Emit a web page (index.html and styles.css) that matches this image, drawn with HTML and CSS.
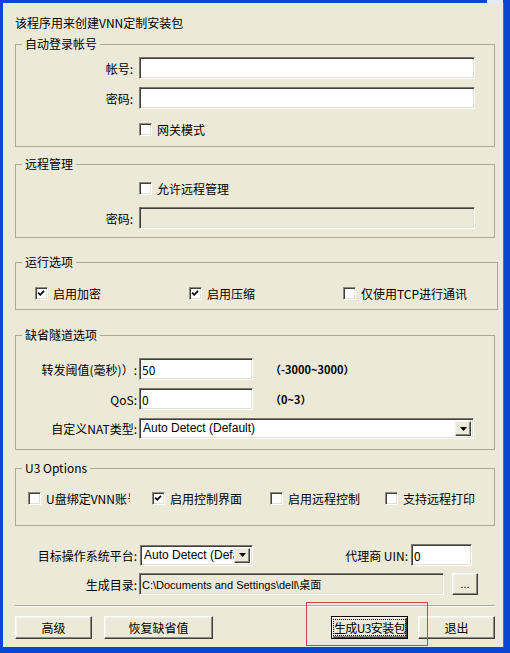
FILE: index.html
```html
<!DOCTYPE html>
<html lang="zh-CN">
<head>
    <meta charset="UTF-8">
    <meta name="viewport" content="width=device-width, initial-scale=1.0">
    <title>VNN U3 安装包</title>
    <link rel="stylesheet" href="styles.css">
</head>
<body>
    <div class="titlebar"><span class="close-edge"></span></div>
    <div class="dialog">
        <p class="intro">该程序用来创建VNN定制安装包</p>

        <!-- 自动登录 -->
        <fieldset class="group login">
            <legend>自动登录帐号</legend>
            <div class="field-row">
                <span class="label">帐号:</span>
                <input class="textbox wide" type="text" value="">
            </div>
            <div class="field-row">
                <span class="label">密码:</span>
                <input class="textbox wide" type="password" value="">
            </div>
            <div class="field-row check-row">
                <span class="label"></span>
                <label class="check"><span class="box"></span>网关模式</label>
            </div>
        </fieldset>

        <!-- 远程管理 -->
        <fieldset class="group remote">
            <legend>远程管理</legend>
            <div class="field-row">
                <span class="label"></span>
                <label class="check"><span class="box"></span>允许远程管理</label>
            </div>
            <div class="field-row">
                <span class="label">密码:</span>
                <input class="textbox wide disabled" type="password" value="" disabled>
            </div>
        </fieldset>

        <!-- 运行选项 -->
        <fieldset class="group run">
            <legend>运行选项</legend>
            <div class="options three">
                <label class="check"><span class="box checked"><svg viewBox="0 0 13 13"><polyline points="2.5,5.5 5,8 9.5,3.5"/></svg></span>启用加密</label>
                <label class="check"><span class="box checked"><svg viewBox="0 0 13 13"><polyline points="2.5,5.5 5,8 9.5,3.5"/></svg></span>启用压缩</label>
                <label class="check"><span class="box"></span>仅使用TCP进行通讯</label>
            </div>
        </fieldset>

        <!-- 缺省隧道选项 -->
        <fieldset class="group tunnel">
            <legend>缺省隧道选项</legend>
            <div class="field-row">
                <span class="label">转发阈值(毫秒)）:</span>
                <input class="textbox short" type="text" value="50">
                <span class="hint">（-3000~3000）</span>
            </div>
            <div class="field-row">
                <span class="label">QoS:</span>
                <input class="textbox short" type="text" value="0">
                <span class="hint">（0~3）</span>
            </div>
            <div class="field-row combo-row">
                <span class="label">自定义NAT类型:</span>
                <div class="combo nat">
                    <span class="combo-text">Auto Detect (Default)</span>
                    <span class="drop"><svg viewBox="0 0 7 4"><polygon points="0,0 7,0 3.5,4"/></svg></span>
                </div>
            </div>
        </fieldset>

        <!-- U3 -->
        <fieldset class="group u3">
            <legend>U3 Options</legend>
            <div class="options four">
                <label class="check"><span class="box"></span><span class="clip">U盘绑定VNN账号</span></label>
                <label class="check"><span class="box checked"><svg viewBox="0 0 13 13"><polyline points="2.5,5.5 5,8 9.5,3.5"/></svg></span>启用控制界面</label>
                <label class="check"><span class="box"></span>启用远程控制</label>
                <label class="check"><span class="box"></span>支持远程打印</label>
            </div>
        </fieldset>

        <div class="bottom-row os-row">
            <span class="wide-label">目标操作系统平台:</span>
            <div class="combo os">
                <span class="combo-text">Auto Detect (Default)</span>
                <span class="drop"><svg viewBox="0 0 7 4"><polygon points="0,0 7,0 3.5,4"/></svg></span>
            </div>
            <span class="uin-label">代理商 UIN:</span>
            <input class="textbox uin" type="text" value="0">
        </div>

        <div class="bottom-row dir-row">
            <span class="wide-label">生成目录:</span>
            <input class="textbox path disabled" type="text" value="C:\Documents and Settings\dell\桌面" disabled>
            <button class="btn browse">...</button>
        </div>

        <div class="separator"></div>

        <div class="button-row">
            <button class="btn">高级</button>
            <button class="btn restore">恢复缺省值</button>
            <button class="btn default"><span class="focus">生成U3安装包</span></button>
            <button class="btn">退出</button>
        </div>

        <div class="highlight"></div>
    </div>
</body>
</html>
```

FILE: styles.css
```css
* {
    box-sizing: border-box;
}

body {
    margin: 0;
    height: 653px;
    overflow: hidden;
    background: #0A46D6; /* window frame */
    font-family: "Noto Sans CJK SC", "Liberation Sans", sans-serif;
    font-size: 12px;
    color: #000;
}

.titlebar {
    height: 3px;
    display: flex;
    justify-content: flex-end;
    padding-right: 7px;
}

.close-edge {
    width: 16px;
    height: 3px;
    background: #E4EAF8;
}

.dialog {
    position: relative;
    height: 644px;
    margin: 0 7px 6px 3px;
    padding: 13px 8px 0 12px;
    background: #ECE9D8;
    box-shadow: 1px 0 #3A6AE6;
}

.intro {
    margin: 0;
    line-height: 14px;
}

/* group boxes */
.group {
    width: 480px;
    margin: 7px 0 0;
    padding: 0;
    border: 1px solid #ABA996;
}

.group legend {
    margin-left: 6px;
    padding: 0 3px;
    line-height: 14px;
}

.login { padding: 6px 0 6px; }
.remote { margin-top: 10px; padding: 6px 0 8px; }
.run { margin-top: 17px; padding: 13px 0 5px; }
.tunnel { margin-top: 18px; padding: 16px 0 10px; }
.u3 { margin-top: 11px; padding: 12px 0 16px; }

.field-row {
    display: flex;
    align-items: center;
    height: 22px;
}

.field-row + .field-row {
    margin-top: 8px;
}

.login .check-row {
    margin-top: 9px;
}

.tunnel .combo-row {
    height: 21px;
}

.label {
    width: 117px;
    margin-right: 6px;
    text-align: right;
    white-space: nowrap;
}

.tunnel .label {
    width: 121px;
    margin-right: 2px;
}

/* sunken edit boxes */
.textbox {
    height: 22px;
    margin: 0;
    padding: 0 2px;
    border: 1px solid;
    border-color: #7C7A6C #FFFFFF #FFFFFF #7C7A6C;
    box-shadow: inset 1px 1px #404040, inset -1px -1px #E2E0D2;
    background: #fff;
    font-family: "Noto Sans CJK SC", "Liberation Sans", sans-serif;
    font-size: 12px;
    color: #000;
    outline: none;
}

.textbox.disabled {
    background: #ECE9D8;
}

.wide { width: 336px; }
.short { width: 114px; }
.uin { width: 61px; }

.path {
    width: 305px;
    font-family: "Liberation Sans", "Noto Sans CJK SC", sans-serif;
    font-size: 11px;
}

.hint {
    margin-left: 17px;
    font-size: 11px;
    font-weight: bold;
}

/* drop-down combos */
.combo {
    display: flex;
    align-items: stretch;
    height: 21px;
    padding: 2px;
    border: 1px solid;
    border-color: #7C7A6C #FFFFFF #FFFFFF #7C7A6C;
    box-shadow: inset 1px 1px #404040, inset -1px -1px #E2E0D2;
    background: #fff;
}

.combo-text {
    flex: 1;
    overflow: hidden;
    white-space: nowrap;
    padding-left: 1px;
    font-family: "Liberation Sans", sans-serif;
    font-size: 12px;
    line-height: 15px;
}

.drop {
    width: 16px;
    display: flex;
    align-items: center;
    justify-content: center;
    background: #ECE9D8;
    border: 1px solid;
    border-color: #F4F3EE #404040 #404040 #F4F3EE;
    box-shadow: inset -1px -1px #8C8A7C;
}

.drop svg {
    width: 7px;
    height: 4px;
    fill: #000;
}

.nat { width: 335px; }
.os { width: 113px; }

/* checkboxes */
.options {
    display: flex;
    align-items: center;
    height: 22px;
}

.three { padding-left: 19px; }
.three .check { width: 154px; }

.four { padding-left: 12px; }
.four .check:nth-child(1) { width: 124px; }
.four .check:nth-child(2) { width: 118px; }
.four .check:nth-child(3) { width: 115px; }

.check {
    display: flex;
    align-items: center;
    white-space: nowrap;
}

.box {
    width: 13px;
    height: 13px;
    margin-right: 5px;
    flex: none;
    border: 1px solid;
    border-color: #8C8A7C #FFFFFF #FFFFFF #8C8A7C;
    box-shadow: inset 1px 1px #404040, inset -1px -1px #E2E0D2;
    background: #fff;
}

.box svg {
    display: block;
    width: 11px;
    height: 11px;
    fill: none;
    stroke: #000;
    stroke-width: 2;
}

.clip {
    width: 84px;
    overflow: hidden;
}

/* bottom fields */
.bottom-row {
    display: flex;
    align-items: center;
    width: 480px;
    height: 22px;
}

.os-row { margin-top: 18px; }
.dir-row { margin-top: 7px; }

.wide-label {
    width: 122px;
    margin-right: 3px;
    text-align: right;
    white-space: nowrap;
}

.dir-row .wide-label {
    margin-right: 2px;
}

.uin-label {
    margin-left: auto;
    margin-right: 3px;
}

.os-row .uin {
    margin-right: 23px;
}

.separator {
    width: 480px;
    height: 2px;
    margin-top: 10px;
    border-top: 1px solid #ACA899;
    border-bottom: 1px solid #fff;
}

/* push buttons */
.btn {
    height: 23px;
    width: 77px;
    padding: 0;
    background: #ECE9D8;
    border: 1px solid;
    border-color: #FFFFFF #404040 #404040 #FFFFFF;
    box-shadow: inset -1px -1px #8C8A7C, inset 1px 1px #F4F3EE;
    font-family: "Noto Sans CJK SC", sans-serif;
    font-size: 12px;
    color: #000;
    white-space: nowrap;
}

.browse {
    width: 26px;
    height: 22px;
    margin-left: 8px;
    font-family: "Liberation Sans", sans-serif;
    font-size: 11px;
}

.button-row {
    display: flex;
    width: 480px;
    margin-top: 9px;
}

.restore {
    width: 109px;
    margin-left: 12px;
}

.default {
    margin-left: auto;
    margin-right: 10px;
    border-color: #000;
    box-shadow: inset 1px 1px #fff, inset -1px -1px #404040, inset -2px -2px #8C8A7C;
}

.focus {
    display: inline-block;
    padding: 0;
    border: 1px dotted #000;
    line-height: 15px;
    letter-spacing: -0.6px;
}

/* red annotation frame */
.highlight {
    position: absolute;
    left: 303px;
    top: 599px;
    width: 122px;
    height: 44px;
    border: 1px solid #CC4848;
    pointer-events: none;
}
```
